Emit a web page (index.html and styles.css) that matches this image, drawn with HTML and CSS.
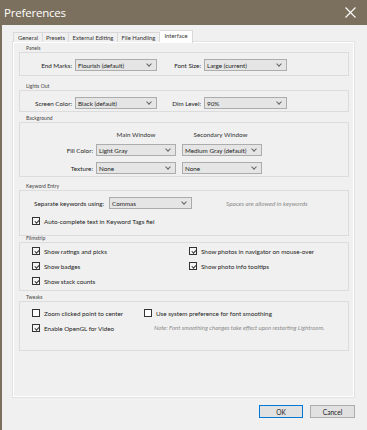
FILE: index.html
```html
<!doctype html>
<html>
<head>
    <meta charset="utf-8">
    <title>Preferences</title>
    <link rel="stylesheet" href="styles.css">
</head>
<body>

<div class="window">

    <div class="titlebar">
        <span class="title">Preferences</span>
        <svg class="close" width="11" height="11" viewBox="0 0 11 11">
            <path d="M0.5 0.5 L10.5 10.5 M10.5 0.5 L0.5 10.5" stroke="#fff" stroke-width="1.1" fill="none"/>
        </svg>
    </div>

    <div class="tabs">
        <span class="tab t-general">General</span>
        <span class="tab t-presets">Presets</span>
        <span class="tab t-external">External Editing</span>
        <span class="tab t-file">File Handling</span>
        <span class="tab t-interface active">Interface</span>
    </div>

    <div class="page">

        <!-- Panels -->
        <div class="group g-panels">
            <div class="gtitle">Panels</div>
            <div class="box">
                <div class="row">
                    <span class="lbl w1">End Marks:</span>
                    <span class="select s82">Flourish (default)<i class="chev"></i></span>
                    <span class="lbl w2">Font Size:</span>
                    <span class="select s83">Large (current)<i class="chev"></i></span>
                </div>
            </div>
        </div>

        <!-- Lights Out -->
        <div class="group g-lights">
            <div class="gtitle">Lights Out</div>
            <div class="box">
                <div class="row">
                    <span class="lbl w1">Screen Color:</span>
                    <span class="select s82">Black (default)<i class="chev"></i></span>
                    <span class="lbl w2">Dim Level:</span>
                    <span class="select s83">90%<i class="chev"></i></span>
                </div>
            </div>
        </div>

        <!-- Background -->
        <div class="group g-background">
            <div class="gtitle">Background</div>
            <div class="box">
                <div class="bg-grid">
                    <span></span>
                    <span class="colhead">Main Window</span>
                    <span class="colhead">Secondary Window</span>

                    <span class="lbl">Fill Color:</span>
                    <span class="select">Light Gray<i class="chev"></i></span>
                    <span class="select">Medium Gray (default)<i class="chev"></i></span>

                    <span class="lbl">Texture:</span>
                    <span class="select">None<i class="chev"></i></span>
                    <span class="select">None<i class="chev"></i></span>
                </div>
            </div>
        </div>

        <!-- Keyword Entry -->
        <div class="group g-keyword">
            <div class="gtitle">Keyword Entry</div>
            <div class="box">
                <div class="row kw-row">
                    <span class="kw-lbl">Separate keywords using:</span>
                    <span class="select s83">Commas<i class="chev"></i></span>
                    <span class="hint">Spaces are allowed in keywords</span>
                </div>
                <label class="check kw-check"><i class="cb on"></i>Auto-complete text in Keyword Tags fiel</label>
            </div>
        </div>

        <!-- Filmstrip -->
        <div class="group g-filmstrip">
            <div class="gtitle">Filmstrip</div>
            <div class="box">
                <div class="cols">
                    <div class="col col-left">
                        <label class="check"><i class="cb on"></i>Show ratings and picks</label>
                        <label class="check"><i class="cb on"></i>Show badges</label>
                        <label class="check"><i class="cb on"></i>Show stack counts</label>
                    </div>
                    <div class="col">
                        <label class="check"><i class="cb on"></i>Show photos in navigator on mouse-over</label>
                        <label class="check"><i class="cb on"></i>Show photo info tooltips</label>
                    </div>
                </div>
            </div>
        </div>

        <!-- Tweaks -->
        <div class="group g-tweaks">
            <div class="gtitle">Tweaks</div>
            <div class="box">
                <div class="cols">
                    <div class="col col-tw">
                        <label class="check"><i class="cb"></i>Zoom clicked point to center</label>
                        <label class="check"><i class="cb on"></i>Enable OpenGL for Video</label>
                    </div>
                    <div class="col">
                        <label class="check"><i class="cb"></i>Use system preference for font smoothing</label>
                        <span class="note">Note: Font smoothing changes take effect upon restarting Lightroom.</span>
                    </div>
                </div>
            </div>
        </div>

    </div>

    <div class="buttons">
        <button class="btn ok">OK</button>
        <button class="btn">Cancel</button>
    </div>

</div>

</body>
</html>
```

FILE: styles.css
```css
* {
    box-sizing: border-box;
    margin: 0;
    padding: 0;
}

html, body {
    width: 367px;
    height: 430px;
    overflow: hidden;
    background: #f0f0f0;
}

body {
    font-family: Lato, "Open Sans", sans-serif;
    font-size: 6.3px;
    color: #222;
}

.window {
    height: 430px;
    border-left: 2px solid #7b6f5d;
}

/* title bar */

.titlebar {
    height: 25px;
    background: #7b6f5d;
    display: flex;
    align-items: center;
    justify-content: space-between;
    padding: 0 11px 1px 2px;
}

.title {
    color: #fff;
    font-family: "Open Sans", sans-serif;
    font-size: 11.5px;
    letter-spacing: -0.2px;
}

/* tabs */

.tabs {
    display: flex;
    align-items: flex-end;
    height: 17px;
    padding-left: 11px;
}

.tab {
    height: 10px;
    line-height: 9px;
    text-align: center;
    border: 1px solid #d9d9d9;
    border-bottom: none;
    border-right: none;
    background: #f0f0f0;
    font-size: 5.9px;
    color: #333;
}

.t-general { width: 29px; }
.t-presets { width: 26px; }
.t-external { width: 49px; }
.t-file { width: 43px; border-right: 1px solid #d9d9d9; }

.tab.active {
    width: 33px;
    height: 13px;
    line-height: 10px;
    background: #fff;
    border-right: 1px solid #d9d9d9;
    border-left: none;
    margin-bottom: -1px;
    position: relative;
    z-index: 1;
}

/* tab page */

.page {
    margin-left: 11px;
    width: 341px;
    height: 355px;
    border: 1px solid #fff;
    box-shadow: 0 0 0 1px #e2e2e2;
    padding: 3px 4px 0 5px;
}

.gtitle {
    height: 6px;
    line-height: 5px;
    font-size: 5.1px;
    color: #444;
    padding-left: 7px;
}

.box {
    border: 1px solid #dcdcdc;
}

.g-panels .box { height: 24px; padding-top: 6px; }
.g-lights { margin-top: 8px; }
.g-lights .box { height: 22px; padding-top: 6px; }
.g-background { margin-top: 4px; }
.g-background .box { height: 55px; padding-top: 7px; }
.g-keyword { margin-top: 7px; }
.g-keyword .box { height: 46px; padding-top: 6px; }
.g-filmstrip { margin-top: 0; }
.g-filmstrip .box { height: 49px; padding-top: 4px; }
.g-tweaks { margin-top: 4px; }
.g-tweaks .box { height: 50px; padding-top: 7px; }

.row {
    display: flex;
    align-items: center;
    height: 12px;
}

.lbl {
    text-align: right;
    margin-right: 3px;
    white-space: nowrap;
}

.w1 { width: 52px; }
.w2 { width: 44px; }

/* combo boxes */

.select {
    display: flex;
    align-items: center;
    justify-content: space-between;
    height: 12px;
    background: #e5e5e5;
    border: 1px solid #acacac;
    padding: 0 5px 0 2px;
    white-space: nowrap;
}

.s82 { width: 82px; }
.s83 { width: 83px; }

.chev {
    width: 4px;
    height: 4px;
    border-right: 1px solid #666;
    border-bottom: 1px solid #666;
    transform: rotate(45deg);
    margin-top: -2px;
}

/* background grid */

.bg-grid {
    display: grid;
    grid-template-columns: 73px 80px 83px;
    grid-template-rows: 8px 12px 12px;
    column-gap: 3px;
    row-gap: 6px;
    align-items: center;
}

.bg-grid .lbl { margin-right: 0; }

.bg-grid .select:last-child,
.bg-grid .select:nth-child(6) {
    margin-left: 3px;
}

.colhead {
    text-align: center;
    color: #333;
}

/* keyword entry */

.kw-lbl {
    padding-left: 14px;
    width: 89px;
}

.hint {
    margin-left: 34px;
    font-style: italic;
    color: #8a8a8a;
}

/* checkboxes */

.check {
    display: flex;
    align-items: center;
    height: 8px;
    white-space: nowrap;
}

.cb {
    width: 8px;
    height: 8px;
    margin-right: 4px;
    background: #fff;
    border: 1px solid #333;
    position: relative;
}

.cb.on {
    background: #f4f4f4;
}

.cb.on::after {
    content: "";
    position: absolute;
    left: 1px;
    top: 0;
    width: 4px;
    height: 2px;
    border-left: 1px solid #333;
    border-bottom: 1px solid #333;
    transform: rotate(-45deg) translate(-0.5px, 1.5px);
}

.kw-check {
    margin: 8px 0 0 12px;
}

.cols {
    display: flex;
    padding-left: 12px;
}

.col {
    display: flex;
    flex-direction: column;
    gap: 7px;
}

.col-left { width: 157px; }
.col-tw { width: 112px; }

.note {
    height: 8px;
    line-height: 8px;
    margin-left: 10px;
    font-style: italic;
    color: #8a8a8a;
    font-size: 6px;
}

/* buttons */

.buttons {
    display: flex;
    justify-content: flex-end;
    gap: 7px;
    padding: 8px 12px 0 0;
}

.btn {
    width: 45px;
    height: 13px;
    font-family: Lato, sans-serif;
    font-size: 6.6px;
    background: #e1e1e1;
    border: 1px solid #adadad;
    color: #222;
}

.btn.ok {
    width: 44px;
    border-color: #0078d7;
}
```
